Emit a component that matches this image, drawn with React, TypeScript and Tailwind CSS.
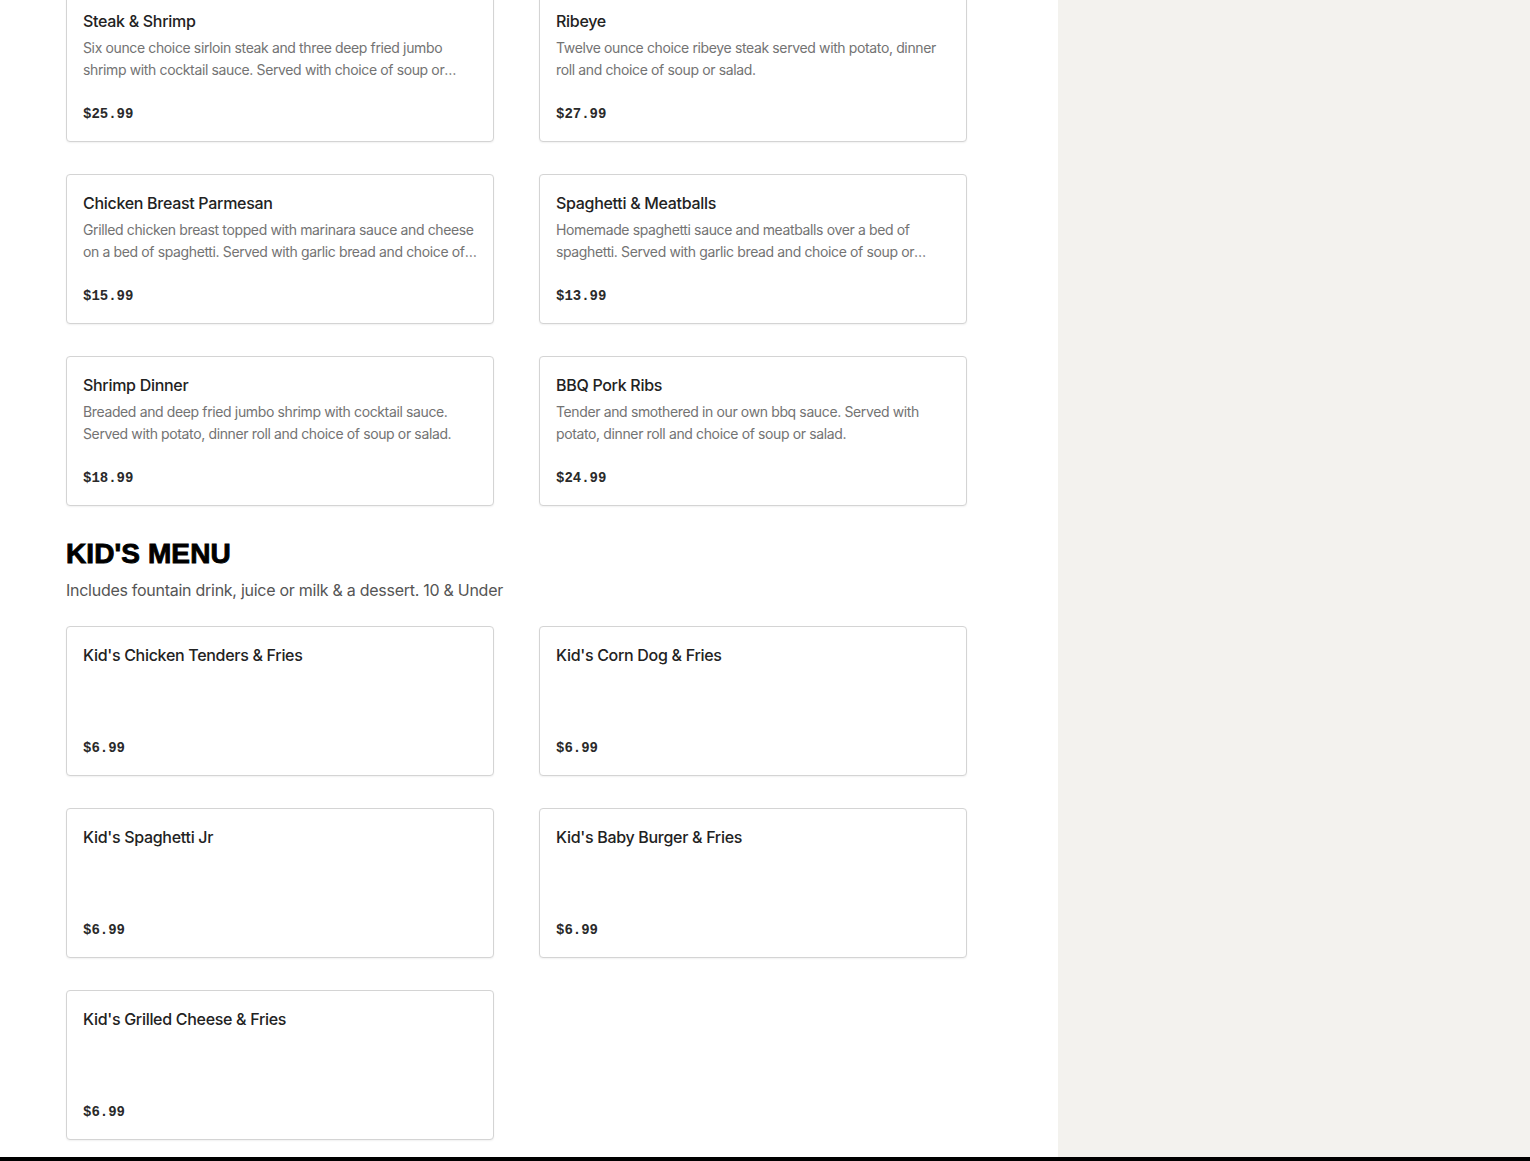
type Item = { name: string; desc?: string; price: string };

const dinners: Item[] = [
  {
    name: "Steak & Shrimp",
    desc: "Six ounce choice sirloin steak and three deep fried jumbo shrimp with cocktail sauce. Served with choice of soup or salad.",
    price: "$25.99",
  },
  {
    name: "Ribeye",
    desc: "Twelve ounce choice ribeye steak served with potato, dinner roll and choice of soup or salad.",
    price: "$27.99",
  },
  {
    name: "Chicken Breast Parmesan",
    desc: "Grilled chicken breast topped with marinara sauce and cheese on a bed of spaghetti. Served with garlic bread and choice of soup or salad.",
    price: "$15.99",
  },
  {
    name: "Spaghetti & Meatballs",
    desc: "Homemade spaghetti sauce and meatballs over a bed of spaghetti. Served with garlic bread and choice of soup or salad.",
    price: "$13.99",
  },
  {
    name: "Shrimp Dinner",
    desc: "Breaded and deep fried jumbo shrimp with cocktail sauce. Served with potato, dinner roll and choice of soup or salad.",
    price: "$18.99",
  },
  {
    name: "BBQ Pork Ribs",
    desc: "Tender and smothered in our own bbq sauce. Served with potato, dinner roll and choice of soup or salad.",
    price: "$24.99",
  },
];

const kids: Item[] = [
  { name: "Kid's Chicken Tenders & Fries", price: "$6.99" },
  { name: "Kid's Corn Dog & Fries", price: "$6.99" },
  { name: "Kid's Spaghetti Jr", price: "$6.99" },
  { name: "Kid's Baby Burger & Fries", price: "$6.99" },
  { name: "Kid's Grilled Cheese & Fries", price: "$6.99" },
];

function MenuCard({ item }: { item: Item }) {
  return (
    <div className="flex h-[150px] flex-col justify-between rounded-[4px] border border-[#d4d4d4] bg-white p-4 shadow-[0_1px_2px_rgba(0,0,0,0.06)]">
      <div>
        <h3 className="text-[16px] leading-6 font-medium tracking-[-0.3px] text-[#222222]">{item.name}</h3>
        {item.desc && (
          <p className="mt-[4px] line-clamp-2 text-[14px] leading-[22px] tracking-[-0.37px] text-[#737373]">
            {item.desc}
          </p>
        )}
      </div>
      <div className="font-['Liberation_Mono',monospace] text-[14px] leading-[22px] font-bold text-[#2a2a2a]">
        {item.price}
      </div>
    </div>
  );
}

function Grid({ items }: { items: Item[] }) {
  return (
    <div className="grid grid-cols-[428px_428px] gap-x-[45px] gap-y-[32px]">
      {items.map((it) => (
        <MenuCard key={it.name} item={it} />
      ))}
    </div>
  );
}

export default function App() {
  return (
    <div className="flex h-[1161px] flex-col overflow-hidden bg-white font-['Inter',sans-serif]">
      <div className="flex flex-1 overflow-hidden">
        <main className="w-[1058px] shrink-0 pl-[66px]">
          <div className="-mt-[8px]">
            <Grid items={dinners} />
          </div>
          <h2 className="mt-[33px] font-['Liberation_Sans',Arial,sans-serif] text-[28px] leading-[30px] font-black tracking-[0.1px] text-black [-webkit-text-stroke:0.9px_black]">
            KID'S MENU
          </h2>
          <p className="mt-[9px] text-[16px] leading-6 tracking-[-0.27px] text-[#555555]">
            Includes fountain drink, juice or milk &amp; a dessert. 10 &amp; Under
          </p>
          <div className="mt-[24px]">
            <Grid items={kids} />
          </div>
        </main>
        <aside className="flex-1 bg-[#f3f2ee]" />
      </div>
      <div className="h-[4px] shrink-0 bg-black" />
    </div>
  );
}
